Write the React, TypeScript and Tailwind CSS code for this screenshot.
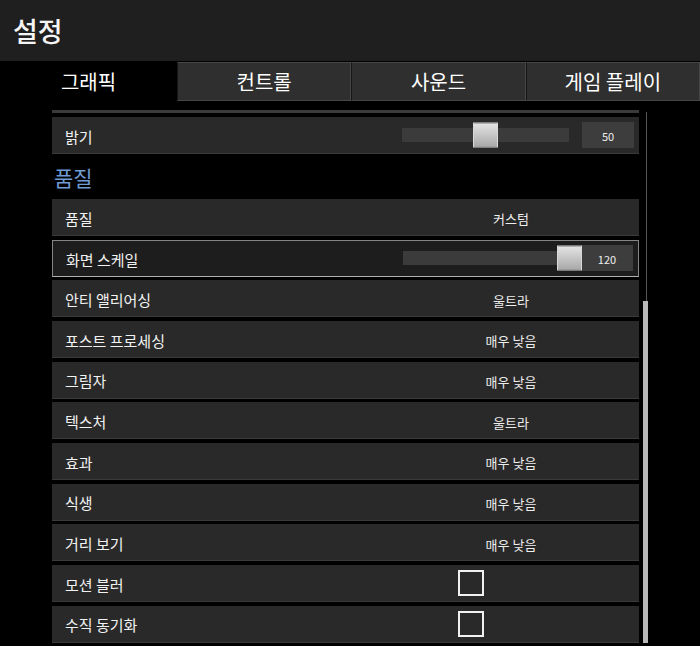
import React from 'react';

const font = { fontFamily: '"Noto Sans CJK KR", "Noto Sans", sans-serif' };

const tabs = ['그래픽', '컨트롤', '사운드', '게임 플레이'];

type Row =
  | { kind: 'text'; label: string; value: string }
  | { kind: 'check'; label: string }
  | { kind: 'slider'; label: string; value: string; thumb: number; active?: boolean };

const rows: Row[] = [
  { kind: 'text', label: '품질', value: '커스텀' },
  { kind: 'slider', label: '화면 스케일', value: '120', thumb: 154, active: true },
  { kind: 'text', label: '안티 앨리어싱', value: '울트라' },
  { kind: 'text', label: '포스트 프로세싱', value: '매우 낮음' },
  { kind: 'text', label: '그림자', value: '매우 낮음' },
  { kind: 'text', label: '텍스처', value: '울트라' },
  { kind: 'text', label: '효과', value: '매우 낮음' },
  { kind: 'text', label: '식생', value: '매우 낮음' },
  { kind: 'text', label: '거리 보기', value: '매우 낮음' },
  { kind: 'check', label: '모션 블러' },
  { kind: 'check', label: '수직 동기화' },
];

const Slider = ({ value, thumb }: { value: string; thumb: number }) => (
  <div className="flex items-center flex-1">
    <div className="relative w-[167px] h-[14px] bg-[#3b3b3b]">
      <div
        className="absolute top-1/2 -translate-y-1/2 w-[25px] h-[25px] border border-[#d8d8d8] bg-gradient-to-b from-[#e4e4e4] to-[#a9a9a9]"
        style={{ left: thumb }}
      />
    </div>
    <div className="ml-auto w-[52px] h-[26px] bg-[#3d3d3d] flex items-center justify-center text-[11px] text-[#eeeeee]">
      <span className="translate-y-[1px]">{value}</span>
    </div>
  </div>
);

const SettingRow = ({ row }: { row: Row }) => {
  const active = row.kind === 'slider' && row.active;
  return (
    <div
      className={
        'flex items-center h-[37px] pl-[13px] pr-[5px] border-b ' +
        (active
          ? 'bg-[#1d1d1d] border border-[#858585] border-b-[#b0b0b0] pl-[12px] pr-[4px]'
          : 'bg-[#292929] border-b-[#3a3a3a]')
      }
    >
      <span className="w-[337px] text-[15px] text-[#f2f2f2] translate-y-[2px]">{row.label}</span>
      {row.kind === 'text' && (
        <span className="w-[218px] text-center text-[13px] text-[#eeeeee] translate-y-[2px]">{row.value}</span>
      )}
      {row.kind === 'check' && (
        <div className="ml-[56px] w-[26px] h-[26px] border-2 border-[#f0f0f0]" />
      )}
      {row.kind === 'slider' && <Slider value={row.value} thumb={row.thumb} />}
    </div>
  );
};

export default function App() {
  return (
    <div className="w-[700px] h-[646px] bg-black overflow-hidden flex flex-col text-white" style={font}>
      <header className="h-[61px] bg-[#1f1f1f] flex items-center pl-[13px] shrink-0">
        <h1 className="text-[27px] font-medium text-[#f4f4f4] leading-none">설정</h1>
      </header>

      <nav className="h-[40px] flex shrink-0 pt-px">
        {tabs.map((t, i) => (
          <div
            key={t}
            className={
              'flex items-center justify-center text-[20px] h-[39px] ' +
              (i === 0
                ? 'w-[177px] bg-black'
                : 'flex-1 bg-[#2f2f2f] border border-[#474747] border-l-[#151515]')
            }
          >
            {t}
          </div>
        ))}
      </nav>

      <div className="flex flex-1 min-h-0">
        <div className="w-[52px] shrink-0" />

        <div className="w-[587px] shrink-0 flex flex-col">
          <div className="mt-[9px] h-[3px] bg-[#3a3a3a]" />
          <div className="mt-[4px] flex items-center h-[37px] pl-[13px] pr-[5px] bg-[#292929] border-b border-b-[#3a3a3a]">
            <span className="w-[337px] text-[15px] text-[#f2f2f2] translate-y-[2px]">밝기</span>
            <Slider value="50" thumb={71} />
          </div>

          <div className="h-[45px] flex items-center pl-[2px]">
            <h2 className="text-[21px] text-[#6f9bd2] leading-none mt-[2px]">품질</h2>
          </div>

          <div className="flex flex-col gap-[3.67px]">
            {rows.map((r) => (
              <SettingRow key={r.label} row={r} />
            ))}
          </div>
        </div>

        <div className="ml-[4px] w-[5px] flex flex-col">
          <div className="mt-[11px] ml-[3px] w-px h-[189px] bg-[#555555]" />
          <div className="w-[5px] h-[342px] bg-[#b8b8b8]" />
        </div>
      </div>
    </div>
  );
}
